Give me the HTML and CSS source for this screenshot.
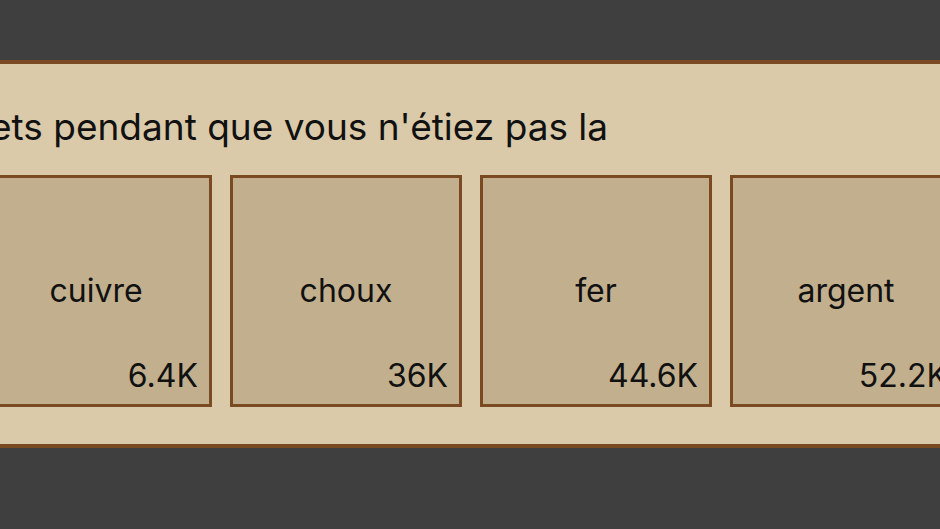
FILE: index.html
```html
<!DOCTYPE html>
<html lang="fr">
<head>
<meta charset="utf-8">
<title>Récolte</title>
<link rel="stylesheet" href="styles.css">
</head>
<body>
<div class="stage">
  <section class="panel">
    <h2 class="title">ets pendant que vous n'étiez pas la</h2>
    <div class="cards">
      <div class="card"><span class="name">cuivre</span><span class="value">6.4K</span></div>
      <div class="card"><span class="name">choux</span><span class="value">36K</span></div>
      <div class="card"><span class="name">fer</span><span class="value">44.6K</span></div>
      <div class="card"><span class="name">argent</span><span class="value">52.2K</span></div>
    </div>
  </section>
</div>
</body>
</html>
```
FILE: styles.css
```css
html, body {
  margin: 0;
  padding: 0;
  height: 100%;
}
body {
  background: #3f3f3f;
  overflow: hidden;
  font-family: Inter, "Noto Sans", "Liberation Sans", sans-serif;
  color: #111;
}
.stage {
  display: flex;
  padding-top: 60px;
  margin-left: -40px;
}
.panel {
  flex: 0 0 auto;
  width: 1100px;
  box-sizing: border-box;
  background: #dacaa9;
  border: 4px solid #7a4a22;
  padding: 40px 16px 37px 16px;
}
.title {
  margin: 0 0 26px 10px;
  font-size: 37px;
  font-weight: 400;
  line-height: 45px;
}
.cards {
  display: flex;
  gap: 18px;
}
.card {
  flex: 0 0 auto;
  box-sizing: border-box;
  width: 232px;
  height: 232px;
  background: #c1af8d;
  border: 3px solid #7a4a22;
  display: grid;
  font-size: 32px;
  line-height: 40px;
}
.name {
  grid-area: 1 / 1;
  place-self: center;
}
.value {
  grid-area: 1 / 1;
  align-self: end;
  justify-self: end;
  margin: 0 11px 8px 0;
}
```
